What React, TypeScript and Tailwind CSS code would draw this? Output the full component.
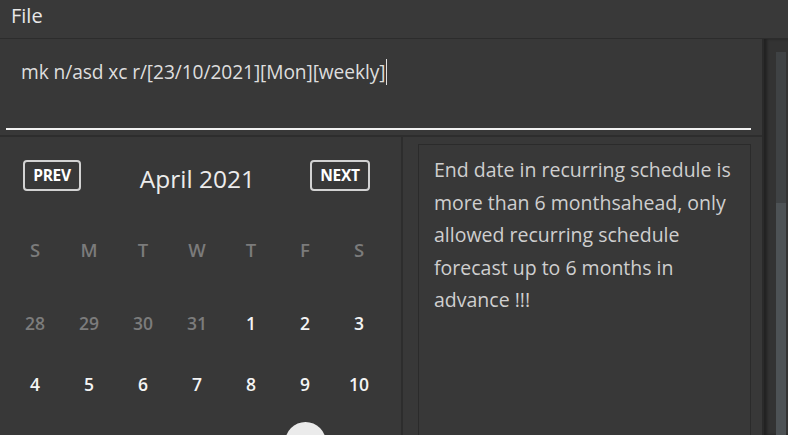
import React from "react";

const font = { fontFamily: '"Open Sans", "Noto Sans", sans-serif' };

const weekdays = ["S", "M", "T", "W", "T", "F", "S"];
const rows: { d: string; muted?: boolean }[][] = [
  [
    { d: "28", muted: true },
    { d: "29", muted: true },
    { d: "30", muted: true },
    { d: "31", muted: true },
    { d: "1" },
    { d: "2" },
    { d: "3" },
  ],
  [{ d: "4" }, { d: "5" }, { d: "6" }, { d: "7" }, { d: "8" }, { d: "9" }, { d: "10" }],
  [{ d: "11" }, { d: "12" }, { d: "13" }, { d: "14" }, { d: "15" }, { d: "16" }, { d: "17" }],
];

export default function App() {
  return (
    <div
      className="w-[788px] h-[435px] overflow-hidden bg-[#383838] flex flex-col text-[#e6e6e6]"
      style={font}
    >
      {/* Menu bar */}
      <div className="h-[39px] shrink-0 flex items-center pl-[11px] border-b border-[#2c2c2c] bg-[#393939]">
        <span className="text-[20px] text-[#e8e8e8] leading-none -mt-[7px]">File</span>
      </div>

      <div className="flex-1 flex min-h-0">
        {/* main column */}
        <div className="w-[764px] shrink-0 flex flex-col border-r-[2px] border-[#2a2a2a]">
          {/* command box */}
          <div className="h-[98px] shrink-0 flex flex-col border-b-[2px] border-[#2d2d2d]">
            <div className="h-[89px] flex items-start pl-[21px] pt-[20px]">
              <span className="text-[19.2px] leading-[26px] text-[#dedede] tracking-[-0.1px]">
                mk n/asd xc r/[23/10/2021][Mon][weekly]
              </span>
              <span className="w-[1px] h-[26px] bg-[#e0e0e0] ml-[1px]" />
            </div>
            <div className="ml-[6px] w-[745px] h-[2px] bg-[#f2f2f2]" />
          </div>

          {/* lower */}
          <div className="flex-1 flex min-h-0">
            {/* calendar */}
            <div className="w-[403px] shrink-0 flex flex-col border-r-[2px] border-[#2d2d2d] overflow-hidden">
              <div className="h-[31px] mt-[23px] shrink-0 flex items-center justify-between pl-[23px] pr-[31px]">
                <div className="w-[58px] h-[31px] rounded-[4px] border-2 border-[#d2d2d2] flex items-center justify-center text-[15.5px] font-bold text-white tracking-[-0.3px]">
                  PREV
                </div>
                <div className="text-[24.5px] leading-[33px] text-[#ececec] font-medium mt-[5px] ml-[4px]">April 2021</div>
                <div className="w-[60px] h-[31px] rounded-[4px] border-2 border-[#d2d2d2] flex items-center justify-center text-[15.5px] font-bold text-white tracking-[-0.3px]">
                  NEXT
                </div>
              </div>
              <div className="pl-[8px] grid grid-cols-[repeat(7,54px)] mt-[47px]">
                {weekdays.map((w, i) => (
                  <div
                    key={i}
                    className="h-[24px] flex items-center justify-center text-[18.5px] font-semibold text-[#7b7b7b]"
                  >
                    {w}
                  </div>
                ))}
              </div>
              <div className="pl-[8px] mt-[49px] flex flex-col gap-[37px]">
                {rows.map((r, ri) => (
                  <div key={ri} className="grid grid-cols-[repeat(7,54px)]">
                    {r.map((c, ci) => (
                      <div key={ci} className="h-[24px] flex items-center justify-center">
                        {c.d === "16" ? (
                          <div className="w-[41px] h-[41px] shrink-0 rounded-full bg-[#ebebeb] flex items-center justify-center pt-[8px] text-[17.5px] font-semibold text-[#383838] -mt-[6px]">
                            {c.d}
                          </div>
                        ) : (
                          <span
                            className={
                              "text-[17.5px] font-semibold " +
                              (c.muted ? "text-[#7c7c7c]" : "text-[#f4f4f4]")
                            }
                          >
                            {c.d}
                          </span>
                        )}
                      </div>
                    ))}
                  </div>
                ))}
              </div>
            </div>

            {/* result panel */}
            <div className="flex-1 min-w-0 pl-[15px] pr-[11px] pt-[7px]">
              <div className="h-full border border-b-0 border-[#2b2b2b] pl-[15px] pt-[9px]">
                <div className="text-[19.5px] leading-[32.5px] text-[#cfcfcf]">
                  <div>End date in recurring schedule is</div>
                  <div>more than 6 monthsahead, only</div>
                  <div>allowed recurring schedule</div>
                  <div>forecast up to 6 months in</div>
                  <div>advance !!!</div>
                </div>
              </div>
            </div>
          </div>
        </div>

        {/* right side column */}
        <div className="flex-1 bg-[#333333] pl-[12px] pt-[13px] shadow-[inset_3px_0_3px_rgba(0,0,0,0.35)]">
          <div className="w-[10px] h-full bg-[#3f4244] flex flex-col pt-[151px]">
            <div className="flex-1 bg-[#4d5255]" />
          </div>
        </div>
      </div>
    </div>
  );
}
